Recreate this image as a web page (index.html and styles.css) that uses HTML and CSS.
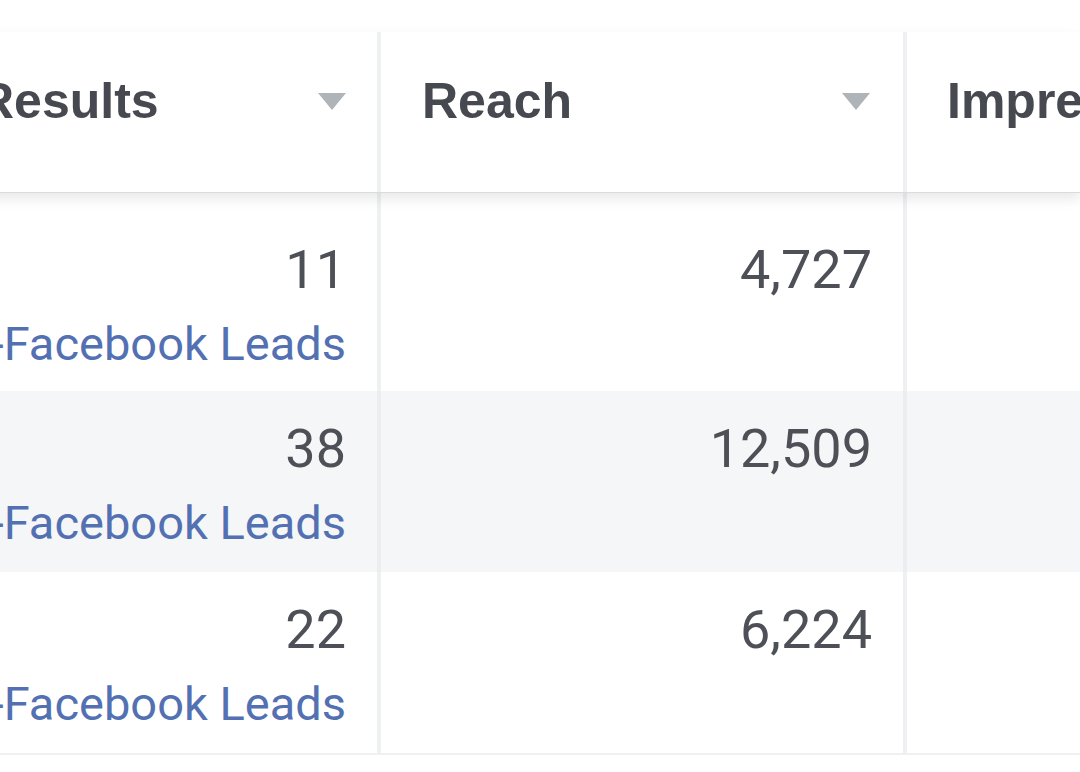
FILE: index.html
```html
<!DOCTYPE html>
<html lang="en">
<head>
<meta charset="utf-8">
<title>Ads table</title>
<link rel="stylesheet" href="styles.css">
</head>
<body>
<div class="table">
  <div class="row head">
    <div class="cell hcell c1"><span class="htext">Results</span><span class="caret"></span></div>
    <div class="cell hcell c2"><span class="htext">Reach</span><span class="caret"></span></div>
    <div class="cell hcell c3"><span class="htext">Impressions</span></div>
  </div>
  <div class="row body first">
    <div class="cell num c1"><div class="val">11</div><div class="link">On-Facebook Leads</div></div>
    <div class="cell num c2"><div class="val">4,727</div></div>
    <div class="cell num c3"></div>
  </div>
  <div class="row body alt">
    <div class="cell num c1"><div class="val">38</div><div class="link">On-Facebook Leads</div></div>
    <div class="cell num c2"><div class="val">12,509</div></div>
    <div class="cell num c3"></div>
  </div>
  <div class="row body last">
    <div class="cell num c1"><div class="val">22</div><div class="link">On-Facebook Leads</div></div>
    <div class="cell num c2"><div class="val">6,224</div></div>
    <div class="cell num c3"></div>
  </div>
</div>
</body>
</html>
```
FILE: styles.css
```css
html, body {
  margin: 0;
  padding: 0;
  background: #ffffff;
  overflow: hidden;
  width: 1080px;
  height: 772px;
}

body {
  font-family: Roboto, "Liberation Sans", Arial, sans-serif;
  color: #4b4f56;
}

.table {
  margin-top: 32px;
  margin-left: -100px;
  width: 1180px;
  display: flex;
  flex-direction: column;
}

.row {
  display: grid;
  grid-template-columns: 481px 526px 1fr;
}

.cell {
  box-sizing: border-box;
  border-right: 4px solid #eff0f2;
  overflow: hidden;
  white-space: nowrap;
}

.cell.c3 {
  border-right: none;
}

.head {
  height: 160px;
  border-bottom: 1px solid #d9dbde;
  background: #ffffff;
  position: relative;
  z-index: 1;
  box-shadow: 0 6px 12px rgba(0, 0, 0, 0.09);
}

.hcell {
  display: flex;
  justify-content: space-between;
  align-items: flex-start;
  padding: 39px 31px 0 38px;
}

.hcell.c1 {
  padding-left: 78px;
}

.hcell.c2 {
  padding-left: 41px;
  padding-right: 33px;
}

.hcell.c3 {
  padding-left: 40px;
}

.htext {
  font-family: "Liberation Sans", Arial, sans-serif;
  font-size: 50px;
  font-weight: 700;
  line-height: 60px;
  color: #46494f;
}

.caret {
  width: 0;
  height: 0;
  margin-top: 22px;
  border-left: 14px solid transparent;
  border-right: 14px solid transparent;
  border-top: 17px solid #aeb4b7;
}

.body {
  height: 181px;
  background: #ffffff;
}

.body.first {
  height: 198px;
}

.body.alt {
  background: #f5f6f7;
}

.body.alt .cell {
  border-right-color: #ebedf0;
}

.body.alt .cell.c3 {
  border-right: none;
}

.body.last {
  border-bottom: 2px solid #eef0f2;
}

.num {
  text-align: right;
  padding: 22px 31px 0 0;
}

.first .num {
  padding-top: 41px;
}

.val {
  font-size: 54px;
  line-height: 72px;
  color: #4d5056;
}

.link {
  font-size: 47px;
  line-height: 75px;
  color: #5371b2;
  display: flex;
  justify-content: flex-end;
}
```
